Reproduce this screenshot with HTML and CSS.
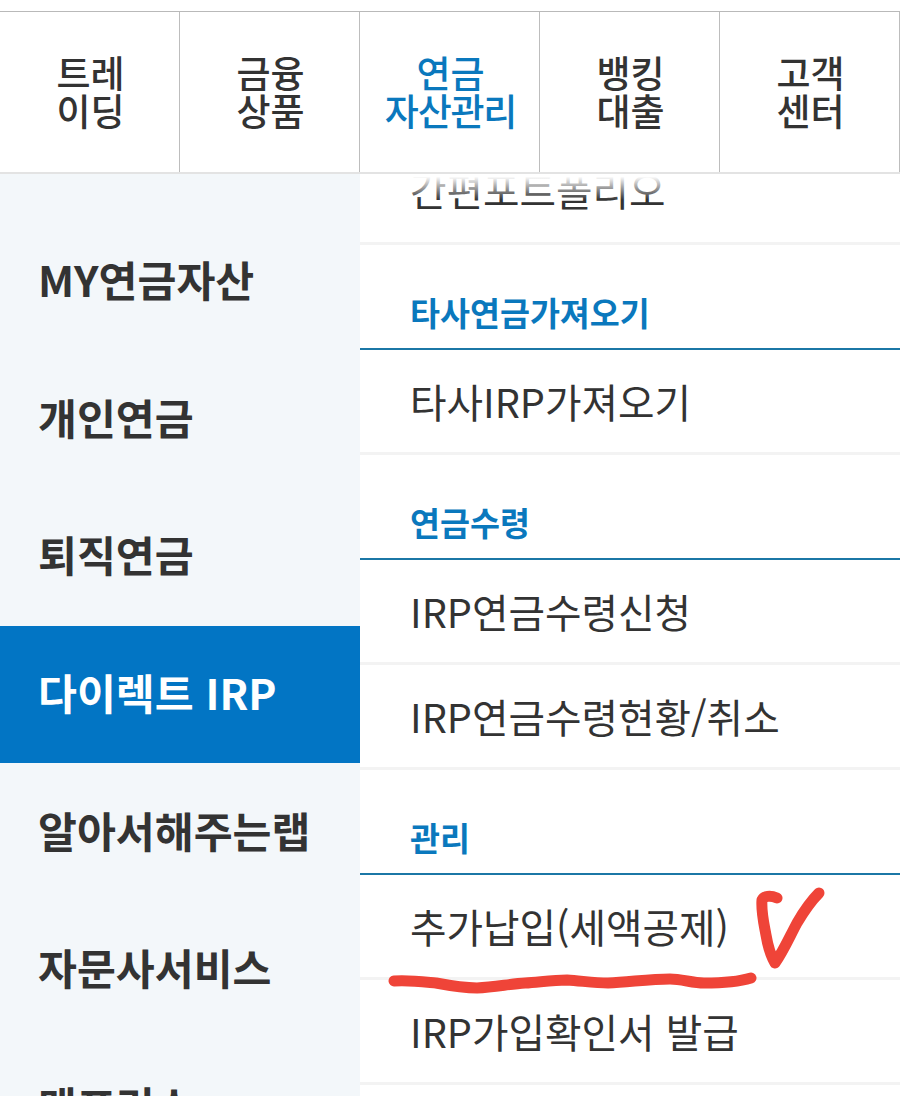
FILE: index.html
```html
<!DOCTYPE html>
<html lang="ko">
<head>
<meta charset="utf-8">
<title>연금자산관리</title>
<link rel="stylesheet" href="styles.css">
</head>
<body>
<div class="page">
  <nav class="topnav">
    <a class="tab">트레<br>이딩</a>
    <a class="tab">금융<br>상품</a>
    <a class="tab active">연금<br><span class="tight">자산관리</span></a>
    <a class="tab">뱅킹<br>대출</a>
    <a class="tab">고객<br>센터</a>
  </nav>
  <div class="main">
    <ul class="side">
      <li class="side-item">MY연금자산</li>
      <li class="side-item">개인연금</li>
      <li class="side-item">퇴직연금</li>
      <li class="side-item current">다이렉트 IRP</li>
      <li class="side-item">알아서해주는랩</li>
      <li class="side-item">자문사서비스</li>
      <li class="side-item">맨프리스</li>
    </ul>
    <div class="panel">
      <div class="row">간편포트폴리오</div>
      <div class="head">타사연금가져오기</div>
      <div class="row">타사IRP가져오기</div>
      <div class="head">연금수령</div>
      <div class="row">IRP연금수령신청</div>
      <div class="row">IRP연금수령현황/취소</div>
      <div class="head">관리</div>
      <div class="row">추가납입(세액공제)</div>
      <div class="row">IRP가입확인서 발급</div>
    </div>
  </div>
  <svg class="scribble" viewBox="0 0 900 1096" width="900" height="1096" aria-hidden="true">
    <path class="ink-line" d="M394 981 C410 980 425 982 436 983 C452 986 465 988 477 988 C495 987 510 984 525 983 C540 982 553 980 567 980 C582 981 595 983 608 983 C630 982 650 979 670 979 C682 979 692 983 704 983 C720 983 738 982 751 978"/>
    <path class="ink-check" d="M777 898 C770 895 764 896 762 900 C761 912 764 924 766 935 C768 947 771 956 775 963 C783 952 790 936 797 923 C804 911 811 901 819 893"/>
  </svg>
</div>
</body>
</html>
```
FILE: styles.css
```css
* { box-sizing: border-box; }
html, body { margin: 0; padding: 0; background: #fff; }
body { font-family: "Noto Sans CJK KR", "Noto Sans", sans-serif; color: #333; }
.page { position: relative; width: 900px; height: 1096px; overflow: hidden; padding-top: 11px; }

.topnav {
  display: grid;
  grid-template-columns: repeat(5, 180px);
  height: 163px;
  border-top: 1px solid #b9b9b9;
  border-bottom: 2px solid #e3e3e3;
}
.tab {
  display: block;
  padding: 41px 0 0 2px;
  text-align: center;
  font-size: 37px;
  line-height: 38px;
  font-weight: 500;
  color: #333;
  border-right: 1px solid #bdbdbd;
}
.tab.active { color: #0a78bd; }
.tight { letter-spacing: -1.2px; }

.main { display: flex; height: 922px; }
.side {
  list-style: none;
  margin: 0;
  padding: 39px 0 0;
  width: 360px;
  flex: none;
  background: #f3f7fa;
  overflow: hidden;
}
.side-item {
  display: flex;
  align-items: center;
  height: 137.6px;
  padding: 0 0 5px 38px;
  font-size: 42.3px;
  font-weight: 700;
  line-height: 50px;
  color: #333;
}
.side-item.current { background: #0275c4; color: #fff; }

.panel { position: relative; flex: 1; overflow: hidden; }
.panel::before {
  content: "";
  position: absolute;
  left: 0;
  right: 0;
  top: 0;
  height: 26px;
  background: linear-gradient(#fff 10%, rgba(255, 255, 255, 0));
}
.row {
  display: flex;
  align-items: center;
  height: 105px;
  padding: 0 0 1px 50px;
  font-size: 39.7px;
  line-height: 50px;
  color: #333;
  border-bottom: 3px solid #f3f3f3;
}
.panel .row:first-child { margin-top: -34px; padding-bottom: 5px; }
.head {
  display: flex;
  align-items: flex-end;
  height: 105px;
  padding: 0 0 14px 50px;
  font-size: 32.6px;
  line-height: 44px;
  font-weight: 700;
  color: #0a78bd;
  border-bottom: 2px solid #1b77a6;
}

.scribble { position: absolute; left: 0; top: 0; pointer-events: none; }
.ink-line, .ink-check { fill: none; stroke: #ef4438; stroke-linecap: round; stroke-linejoin: round; }
.ink-line { stroke-width: 11; }
.ink-check { stroke-width: 11; }
```
